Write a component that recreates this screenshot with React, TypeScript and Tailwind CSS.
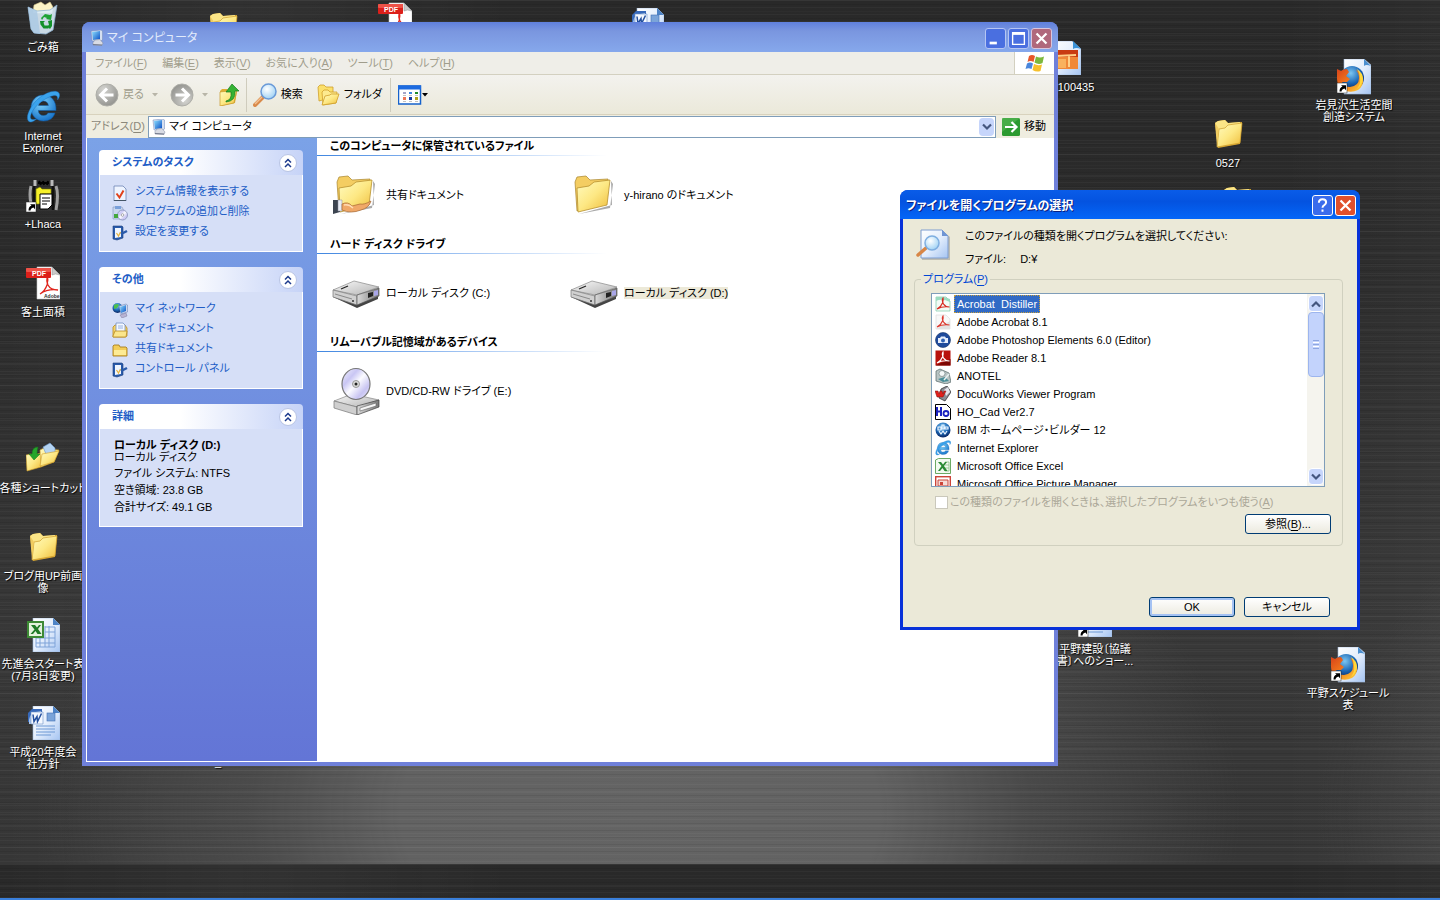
import React from 'react';

interface IconProps {
  className?: string;
}

interface AccelProps {
  text: string;
  hotkey: string;
  tail?: string;
}

const Accel: React.FC<AccelProps> = ({ text, hotkey, tail = '' }) => (
  <span>
    {text}(<u className="underline-offset-2">{hotkey}</u>){tail}
  </span>
);

/* ---------- shared gradients ---------- */

const Gradients = () => (
  <svg className="absolute h-0 w-0" aria-hidden="true">
    <defs>
      <linearGradient id="gold" x1="0" y1="0" x2="1" y2="1">
        <stop offset="0" stopColor="#fffbc0" />
        <stop offset="0.5" stopColor="#fde884" />
        <stop offset="1" stopColor="#eebb38" />
      </linearGradient>
      <linearGradient id="paper" x1="0" y1="0" x2="1" y2="1">
        <stop offset="0" stopColor="#ffffff" />
        <stop offset="0.5" stopColor="#e4eefc" />
        <stop offset="1" stopColor="#a5c4f2" />
      </linearGradient>
      <linearGradient id="steel" x1="0" y1="0" x2="1" y2="1">
        <stop offset="0" stopColor="#f8f8f8" />
        <stop offset="1" stopColor="#b4b4b4" />
      </linearGradient>
      <linearGradient id="steelDark" x1="0" y1="0" x2="1" y2="0">
        <stop offset="0" stopColor="#dadada" />
        <stop offset="1" stopColor="#777777" />
      </linearGradient>
      <radialGradient id="lens" cx="0.4" cy="0.35" r="0.7">
        <stop offset="0" stopColor="#ffffff" />
        <stop offset="1" stopColor="#9bd0f4" />
      </radialGradient>
      <radialGradient id="ieBlue" cx="0.4" cy="0.3" r="0.8">
        <stop offset="0" stopColor="#7fd4fb" />
        <stop offset="1" stopColor="#0c68c4" />
      </radialGradient>
      <radialGradient id="globe" cx="0.45" cy="0.3" r="0.7">
        <stop offset="0" stopColor="#7cc6f2" />
        <stop offset="0.6" stopColor="#1c66b4" />
        <stop offset="1" stopColor="#0a2460" />
      </radialGradient>
      <linearGradient id="fox" x1="0" y1="0" x2="1" y2="1">
        <stop offset="0" stopColor="#d8431a" />
        <stop offset="0.5" stopColor="#f27a1c" />
        <stop offset="1" stopColor="#ffd83c" />
      </linearGradient>
      <radialGradient id="gray" cx="0.35" cy="0.25" r="0.8">
        <stop offset="0" stopColor="#d4d4d0" />
        <stop offset="1" stopColor="#92928e" />
      </radialGradient>
      <linearGradient id="screen" x1="0" y1="0" x2="1" y2="1">
        <stop offset="0" stopColor="#8fe0ff" />
        <stop offset="1" stopColor="#0a4fc4" />
      </linearGradient>
      <linearGradient id="disc" x1="0" y1="0" x2="1" y2="1">
        <stop offset="0" stopColor="#f4f4fb" />
        <stop offset="0.3" stopColor="#c9c6f4" />
        <stop offset="0.5" stopColor="#fbfbff" />
        <stop offset="0.75" stopColor="#c8c4f2" />
        <stop offset="1" stopColor="#eeeeff" />
      </linearGradient>
    </defs>
  </svg>
);

/* ---------- desktop icons, 34 x 34 ---------- */

const ShortcutArrow = () => (
  <g>
    <rect x="0" y="24" width="10" height="10" fill="#fff" stroke="#222" strokeWidth="0.5" />
    <path d="M2.5 32.5c0-2.600 1-4.300 3-5L4 26.200h5v5l-1.600-1.600c-1.600.4-2.600 1.400-2.900 2.900z" fill="#000" />
  </g>
);

const RecycleBin = () => (
  <svg viewBox="0 0 34 34" className="h-[34px] w-[34px]">
    <path d="M8 4l7-3 4 3 5-3 3 5-1 6H7z" fill="#fdf4c6" stroke="#d8c88c" strokeWidth="0.6" />
    <path d="M2 6l9 4 13-1 7-5-4 25-7 4-12-1-3-4z" fill="#dcecf8" fillOpacity="0.9" stroke="#8fb2d0" strokeWidth="0.8" />
    <path d="M2 6l9 4 3 23-6-1-3-4z" fill="#a9c8e4" fillOpacity="0.8" />
    <path d="M15 17l4-4 5 1 2-1-1 6-5-1 1-1-3-1-2 3z" fill="#1fa336" />
    <path d="M14 20l5 0-1.500 1.500 1 3 4 0v3h-5l-3-4zM22 20l4-1 0 6-2 3-3-3 2-1z" fill="#13912a" />
  </svg>
);

const InternetExplorer: React.FC<IconProps> = ({ className = 'h-[34px] w-[34px]' }) => (
  <svg viewBox="0 0 34 34" className={className}>
    <path
      d="M17.500 5C9.500 5 5 11 5 18s5 13 12.500 13c6 0 10-3 11.500-8h-7c-1 1.800-2.500 2.500-4.500 2.500-3 0-5-1.800-5.200-5H30C30.500 11 25.500 5 17.500 5zm-5 10.500c.5-2.800 2.400-4.500 5-4.500s4.600 1.700 4.900 4.500z"
      fill="url(#ieBlue)"
      stroke="#0b5aa8"
      strokeWidth="0.5"
    />
    <path d="M4 32C-2 30 3 17 12 9 20 2 30-1 33 3c1.500 2.500 0 5-1.500 7 .5-3-.5-5-3.500-4.500C21 6.500 9 15 5.500 23c-1.500 3.500-1.500 6 1 6.500 1.500.3 3 0 4.500-1C8.500 31 6 32.500 4 32z" fill="#3aa3ec" stroke="#1668b8" strokeWidth="0.4" />
  </svg>
);

const Lhaca = () => (
  <svg viewBox="0 0 34 34" className="h-[34px] w-[34px]">
    <path d="M9 2v6M26 2v6" stroke="#bbb" strokeWidth="3" />
    <path d="M12 5h11M13 3l2 4M17 3l1 4M22 3l-1 4" stroke="#000" strokeWidth="2" />
    <path d="M5 8q-2 8 0 18M30 8q3 8 0 24" stroke="#a0a0a0" strokeWidth="3" fill="none" />
    <path d="M8 8v20M27 8v24" stroke="#111" strokeWidth="2.500" />
    <path d="M10 11l4-2 2 2h9v5h-9v10h-6z" fill="#f6f02a" stroke="#777a00" strokeWidth="0.6" />
    <path d="M14 16h12v11l-4 4h-8z" fill="#fff" stroke="#000" />
    <path d="M16 20h8M16 23h8M16 26h5" stroke="#000" />
    <ShortcutArrow />
  </svg>
);

const PdfFile = () => (
  <svg viewBox="0 0 34 34" className="h-[34px] w-[34px]">
    <path d="M11 1h15l8 8v24H11z" fill="#fff" stroke="#c8c8c8" strokeWidth="0.6" />
    <path d="M26 1l8 8q-5-2-8 0z" fill="#c9c9c9" stroke="#888" strokeWidth="0.5" />
    <path d="M14 28q5-3 7-9 1.500-5 .5-8-1.500 3 .5 8 2.500 5 10 5-10-1.500-18 4z" fill="none" stroke="#e0241c" strokeWidth="1.300" />
    <rect x="0" y="2" width="25" height="10" rx="1" fill="#dc1f1a" />
    <rect x="0" y="2" width="25" height="4" rx="1" fill="#ee5248" />
    <text x="6" y="10" fontSize="7" fontWeight="700" fill="#fff" fontFamily="Liberation Sans">PDF</text>
    <text x="18" y="32" fontSize="5" fontWeight="700" fill="#333" fontFamily="Liberation Sans">Adobe</text>
  </svg>
);

const Folder = () => (
  <svg viewBox="0 0 34 34" className="h-[34px] w-[34px]">
    <path d="M4 6l3-2 7-1 3 3 14-1-2 22-22 4z" fill="#d9a832" />
    <path d="M4 6l3-2 7-1 3 3 12-1v6L7 13z" fill="#fbe587" />
    <path d="M8 12l6-1 3-3 14-2-2 20L6 30z" fill="url(#gold)" stroke="#cf9d2c" strokeWidth="0.7" />
    <path d="M4 6l2 24 2-18z" fill="#f0cc60" />
  </svg>
);

const ShortcutFolder = () => (
  <svg viewBox="0 0 34 34" className="h-[34px] w-[34px]">
    <path d="M0 13l5-1 2 1 8-2v14L1 29z" fill="url(#gold)" stroke="#cf9d2c" strokeWidth="0.6" />
    <path d="M14 8l4-2 4 1 11 1-5 12-13 5z" fill="url(#gold)" stroke="#cf9d2c" strokeWidth="0.6" />
    <path d="M17 5l7-4 5 5v9l-9-3z" fill="#b5d4f2" stroke="#6c97c8" strokeWidth="0.6" />
    <path d="M14 24l2-12 17-3-5 11z" fill="url(#gold)" stroke="#cf9d2c" strokeWidth="0.6" />
    <path d="M12 5q-6 0-6 7H3l5 6 6-6h-3q0-4 1-7z" fill="#27a52b" stroke="#117a18" strokeWidth="0.5" />
  </svg>
);

const ExcelFile = () => (
  <svg viewBox="0 0 34 34" className="h-[34px] w-[34px]">
    <path d="M7 0h20l7 7v27H7z" fill="url(#paper)" stroke="#9db8dc" strokeWidth="0.6" />
    <path d="M27 0l7 7h-7z" fill="#4d83c6" />
    <path d="M10 20h19v9H10zM10 25h19M14 20v9M19 8v21M23 8v21M19 9h10v11M19 14h10" fill="none" stroke="#7ea3d8" strokeWidth="1" />
    <rect x="1" y="3" width="17" height="17" fill="#3d8a35" />
    <rect x="3" y="5" width="13" height="13" fill="#e3f2dc" />
    <path d="M5 7h4l2 2.500 2-2.500h2l-3 4 3.500 5h-4l-2-3-2.500 3H4.500l4-4.500z" fill="#1f7a26" />
  </svg>
);

const WordFile: React.FC<{ shortcut?: boolean }> = ({ shortcut }) => (
  <svg viewBox="0 0 34 34" className="h-[34px] w-[34px]">
    <path d="M7 0h20l7 7v27H7z" fill="url(#paper)" stroke="#9db8dc" strokeWidth="0.6" />
    <path d="M27 0l7 7h-7z" fill="#4d83c6" />
    <path d="M10 20h19M10 23h19M10 26h19M10 29h15" stroke="#6d98d4" />
    <rect x="21" y="7" width="8" height="8" fill="#7ba4d9" stroke="#416fb4" strokeWidth="0.6" />
    <path d="M2 16V7l4-4h10v14" fill="#3769ba" />
    <path d="M3 14q0-8 12-9v13H3z" fill="#a9c4ea" />
    <path d="M5 6h12v12H5z" fill="#f4f8ff" stroke="#6d90c8" strokeWidth="0.6" />
    <path d="M7 8.500l1 7 3-5 .5 5 4-8" fill="none" stroke="#234f9e" strokeWidth="1.500" />
    {shortcut && <ShortcutArrow />}
  </svg>
);

const PictureFile = () => (
  <svg viewBox="0 0 34 34" className="h-[34px] w-[34px]">
    <path d="M5 0h20l9 8v26H5z" fill="url(#paper)" stroke="#9db8dc" strokeWidth="0.6" />
    <path d="M26 0l8 8q-5-2-8 0z" fill="#3b93d8" />
    <rect x="7" y="9" width="24" height="19" fill="#f08838" />
    <rect x="7" y="9" width="24" height="7" fill="#c93b12" />
    <path d="M9 15l20-1M22 15v11" stroke="#ffd088" strokeWidth="2" />
    <rect x="8" y="18" width="11" height="9" fill="#f9b25e" />
  </svg>
);

const FirefoxFile = () => (
  <svg viewBox="0 0 34 36" className="h-9 w-[34px]">
    <path d="M7 0h20l7 6v29H7z" fill="url(#paper)" stroke="#9db8dc" strokeWidth="0.6" />
    <path d="M27 0l7 7q-5-2-7 0z" fill="#4c8fce" />
    <circle cx="15" cy="19" r="12" fill="url(#globe)" />
    <path d="M0 10l4 2q2-2 6-2l2 3-3 4 4 3-3 3H5q2 5 8 5 9-1 9-9 0-5-3-8 5 2 7 8 1 8-5 12-6 3-12 1Q0 29 0 20z" fill="url(#fox)" />
    <path d="M20 10q6 4 6 10-1 7-6 10 4-5 3-11 0-5-3-9z" fill="#ffd93b" />
    <ShortcutArrow />
  </svg>
);

interface DesktopIconProps {
  /* horizontal centre and top of the icon on the desktop */
  x: number;
  y: number;
  icon?: React.ReactNode;
  lines?: string[];
}

const DesktopIcon: React.FC<DesktopIconProps> = ({ x, y, icon, lines = [] }) => (
  <div className="absolute flex w-24 flex-col items-center text-white" style={{ left: x - 48, top: y }}>
    <div className="h-10">{icon}</div>
    {lines.map((line) => (
      <span key={line} className="text-[11px] leading-3 whitespace-nowrap [text-shadow:1px_1px_1px_#000]">
        {line}
      </span>
    ))}
  </div>
);

const desktopIcons: DesktopIconProps[] = [
  { x: 43, y: 1, icon: <RecycleBin />, lines: ['ごみ箱'] },
  { x: 43, y: 90, icon: <InternetExplorer />, lines: ['Internet', 'Explorer'] },
  { x: 43, y: 178, icon: <Lhaca />, lines: ['+Lhaca'] },
  { x: 43, y: 266, icon: <PdfFile />, lines: ['客土面積'] },
  { x: 43, y: 442, icon: <ShortcutFolder />, lines: ['各種ショートカット'] },
  { x: 43, y: 530, icon: <Folder />, lines: ['ブログ用UP前画', '像'] },
  { x: 43, y: 618, icon: <ExcelFile />, lines: ['先進会スタート表', '(7月3日変更)'] },
  { x: 43, y: 706, icon: <WordFile />, lines: ['平成20年度会', '社方針'] },
  { x: 223, y: 10, icon: <Folder /> },
  { x: 395, y: 2, icon: <PdfFile /> },
  { x: 647, y: 8, icon: <WordFile /> },
  { x: 218, y: 716, lines: ['_'] },
  { x: 1064, y: 41, icon: <PictureFile /> },
  { x: 1076, y: 41, lines: ['100435'] },
  { x: 1228, y: 117, icon: <Folder />, lines: ['0527'] },
  { x: 1237, y: 184, icon: <Folder /> },
  { x: 1354, y: 59, icon: <FirefoxFile />, lines: ['岩見沢生活空間', '創造システム'] },
  { x: 1348, y: 647, icon: <FirefoxFile />, lines: ['平野スケジュール', '表'] },
  { x: 1095, y: 603, icon: <WordFile shortcut />, lines: ['平野建設〔協議', '書〕へのショー...'] },
];

/* ---------- explorer icons ---------- */

const Computer: React.FC<IconProps> = ({ className = 'h-4 w-4' }) => (
  <svg viewBox="0 0 16 16" className={className}>
    <path d="M2 1l10-1 1.500 1v9l-2 1H3z" fill="#d5dff0" stroke="#6f86b8" strokeWidth="0.5" />
    <path d="M3 2l8-1v8l-7 1z" fill="url(#screen)" />
    <path d="M6 10l5-.5 3 3.500-1 2.500-9-.5 0-2.500z" fill="#d8dbe4" stroke="#7b859c" strokeWidth="0.5" />
    <path d="M4 14.500l9 .5" stroke="#747a8c" />
  </svg>
);

const BackForward: React.FC<{ flip?: boolean }> = ({ flip }) => (
  <svg viewBox="0 0 24 24" className={flip ? 'h-6 w-6 rotate-180' : 'h-6 w-6'}>
    <circle cx="12" cy="12" r="11" fill="url(#gray)" stroke="#aeaea8" />
    <path d="M12 5.500L5.500 12l6.500 6.500M6 12h12.500" fill="none" stroke="#fff" strokeWidth="3" />
  </svg>
);

const UpFolder = () => (
  <svg viewBox="0 0 22 22" className="h-[22px] w-[22px]">
    <path d="M2 7l2-2 5 0 2 2 8 0-2 12-14 3z" fill="#e0ad34" />
    <path d="M2 8l17-2-3 13-14 3z" fill="url(#gold)" stroke="#c79a2c" strokeWidth="0.7" />
    <path d="M8 17q6-1 5-9H8l6-8 7 7h-4q1 10-9 11z" fill="#35b335" stroke="#157a1c" strokeWidth="0.7" />
  </svg>
);

const Magnifier = () => (
  <svg viewBox="0 0 24 24" className="h-6 w-6">
    <path d="M2 22l8-8" stroke="#d98a4a" strokeWidth="4" strokeLinecap="round" />
    <path d="M2 21l7-7" stroke="#f4c090" strokeWidth="1.500" />
    <circle cx="15.500" cy="8.500" r="7.500" fill="url(#lens)" stroke="#6a9ad8" strokeWidth="1.500" />
  </svg>
);

const Folders = () => (
  <svg viewBox="0 0 24 22" className="h-[22px] w-6">
    <path d="M1 3l2-2h4l2 2 7 0v10L2 17z" fill="#fbe06c" stroke="#cf9f2c" strokeWidth="0.8" />
    <path d="M5 8l2-2h4l2 2 7 0-1 11-13 2z" fill="#fdeb8f" stroke="#cf9f2c" strokeWidth="0.8" />
    <path d="M5 21l3-9 5-1 1-1 8 0-3 9z" fill="url(#gold)" stroke="#cf9f2c" strokeWidth="0.8" />
  </svg>
);

const Views = () => (
  <svg viewBox="0 0 24 20" className="h-5 w-6">
    <rect x="0.500" y="1" width="22" height="18" fill="#fff" stroke="#1562cc" strokeWidth="1.500" />
    <rect x="0" y="0.500" width="23" height="4" fill="#1d6be0" />
    <path d="M5 7h3v2H5z" fill="#a6a6c8" />
    <path d="M11 7h3v2h-3z" fill="#3c84e0" />
    <path d="M17 7h3v2h-3z" fill="#1d8c2a" />
    <path d="M5 12h3v3H5z" fill="#ee7858" />
    <path d="M11 12h3v3h-3z" fill="#173aa0" />
    <path d="M17 12h3v3h-3z" fill="#b0a01c" />
    <path d="M5 10.500h3M11 10.500h3M17 10.500h3M5 16.500h3M11 16.500h3M17 16.500h3" stroke="#999" strokeWidth="0.6" />
  </svg>
);

const Caret: React.FC<IconProps> = ({ className = 'text-black' }) => (
  <svg viewBox="0 0 6 4" className={`h-1 w-1.5 ${className}`}>
    <path d="M0 0h6L3 3.500z" fill="currentColor" />
  </svg>
);

const WindowsFlag = () => (
  <svg viewBox="0 0 20 18" className="h-[18px] w-5">
    <path d="M4 2q3-2 6 0L8.500 8q-3-2-6 0z" fill="#e8562a" />
    <path d="M11 2.500q4 2 8 0L17.500 9q-4 2-8-.5z" fill="#7cb83c" />
    <path d="M2 9.500q3-2 6 0L6.500 15q-3-1.500-6 0z" fill="#4a86dc" />
    <path d="M9 10q4 2 8 .5L15.500 17q-4 1.500-8-1z" fill="#f6c02c" />
  </svg>
);

const GoArrow = () => (
  <svg viewBox="0 0 18 18" className="h-[18px] w-[18px]">
    <rect width="18" height="18" rx="1.500" fill="#2c9a30" />
    <path d="M0 0h18L0 14z" fill="#5cba58" fillOpacity="0.6" />
    <path d="M3 9h11M9.500 4l5 5-5 5" fill="none" stroke="#fff" strokeWidth="2.200" />
  </svg>
);

const SheetCheck = () => (
  <svg viewBox="0 0 16 16" className="h-4 w-4">
    <path d="M2 1h9l3 3v12H2z" fill="#eef4ff" stroke="#6c84b4" strokeWidth="0.8" />
    <path d="M2 15.500h12" stroke="#456" />
    <path d="M4.500 8.500l3 4 4-7" fill="none" stroke="#e0421c" strokeWidth="2" />
  </svg>
);

const AddRemove = () => (
  <svg viewBox="0 0 16 16" className="h-4 w-4">
    <path d="M1 2h9l2 4v8H1z" fill="#c9d7ee" stroke="#8196bc" strokeWidth="0.6" />
    <path d="M3 1h6v3H3z" fill="#7aa0da" />
    <circle cx="10.500" cy="10" r="5" fill="url(#disc)" stroke="#7a86b0" strokeWidth="0.7" />
    <circle cx="10.500" cy="10" r="1.300" fill="#fff" stroke="#666" strokeWidth="0.5" />
    <rect x="2" y="9" width="4" height="4" fill="#44a83c" />
  </svg>
);

const ControlPanel = () => (
  <svg viewBox="0 0 16 16" className="h-4 w-4">
    <path d="M1 1l9 0 1 1v11l-6 2-4-1z" fill="#2a5bab" stroke="#1b3f7c" strokeWidth="0.6" />
    <path d="M3 3h6v9l-6 1z" fill="#f0f6ff" />
    <path d="M4.500 8l2 3 2-4" fill="none" stroke="#e8b43c" strokeWidth="1.200" />
    <path d="M9 9l6-3" stroke="#2a5bab" strokeWidth="2.500" />
  </svg>
);

const Network = () => (
  <svg viewBox="0 0 16 16" className="h-4 w-4">
    <circle cx="5.500" cy="6" r="5" fill="url(#globe)" />
    <path d="M2 3q3-2 5 0l-2 3-3 1z" fill="#4fc04c" />
    <path d="M7 4l7-2 1.500 1v7L9 12z" fill="#cfd8ee" stroke="#6478ac" strokeWidth="0.5" />
    <path d="M8 5l6-2v6l-5 2z" fill="url(#screen)" />
    <path d="M8 13l6-2 1 3-5 2z" fill="#b8b4d4" stroke="#7c789c" strokeWidth="0.5" />
  </svg>
);

const Documents = () => (
  <svg viewBox="0 0 16 16" className="h-4 w-4">
    <path d="M1 5l2-2 10 0 2 3v8l-2 1H1z" fill="#f5d468" stroke="#b98a22" strokeWidth="0.8" />
    <path d="M4 1h7l2 2v8H4z" fill="#f4f8ff" stroke="#7390c4" strokeWidth="0.8" />
    <path d="M6 4h5M6 6h5" stroke="#7da0dc" strokeWidth="0.8" />
    <path d="M1 14l2-5h12l-1 6H1z" fill="#fbe68c" stroke="#b98a22" strokeWidth="0.8" />
  </svg>
);

const SmallFolder = () => (
  <svg viewBox="0 0 16 16" className="h-4 w-4">
    <path d="M1 4l1-1h5l1 2h6l1 1v8H1z" fill="#f3cd58" stroke="#a87f20" strokeWidth="0.9" />
    <path d="M2 8h12v5H2z" fill="#fdeb95" />
  </svg>
);

const BigFolder: React.FC<{ shared?: boolean }> = ({ shared }) => (
  <svg viewBox="0 0 48 48" className="h-12 w-12">
    <path d="M41 10l1 24-33 9 31-6 3-24z" fill="#555" fillOpacity="0.5" />
    <path d="M5 11l2-5 9-1 4 4 18-1v6L7 40z" fill="#f4cd62" stroke="#a8842c" strokeWidth="0.7" />
    <path d="M7 17l12-2 5-4 16-2-3 25-29 7z" fill="url(#gold)" stroke="#b8902f" strokeWidth="0.8" />
    {shared && (
      <g>
        <path d="M1 29l7 0v12l-7 2z" fill="#3c4450" />
        <path d="M6 29h4v11H6z" fill="#e8ecf4" stroke="#889" strokeWidth="0.5" />
        <path d="M10 33q6-3 10 2l8-2q4 1 11-3-2 7-10 9-10 4-19 0z" fill="#f0a868" stroke="#a86832" strokeWidth="0.7" />
        <path d="M12 34q5-1 9 3" fill="none" stroke="#ffdcb4" strokeWidth="1.500" />
      </g>
    )}
  </svg>
);

const HardDisk = () => (
  <svg viewBox="0 0 48 48" className="h-12 w-12">
    <path d="M1 22l24 9 21-6v5l-21 9L1 28z" fill="#444" />
    <path d="M1 21L22 12l25 6-22 8z" fill="url(#steel)" stroke="#888" strokeWidth="0.7" />
    <path d="M1 21l24 6v9L1 28z" fill="#d0d0d0" stroke="#777" strokeWidth="0.7" />
    <path d="M25 26l22-7v8l-22 9z" fill="url(#steelDark)" stroke="#555" strokeWidth="0.7" />
    <path d="M36 24l5-1v4l-5 2z" fill="#222" />
    <path d="M42 22l4-1v5l-4 1z" fill="#a9a6e8" />
    <path d="M9 20l7-3" stroke="#222" strokeWidth="1.200" />
    <path d="M3 25l17 5" stroke="#8a8a8a" />
    <circle cx="21" cy="32" r="1" fill="#333" />
  </svg>
);

const DvdDrive = () => (
  <svg viewBox="0 0 48 48" className="h-12 w-12">
    <path d="M2 34l18-7 27 6-22 7z" fill="url(#steel)" stroke="#888" strokeWidth="0.7" />
    <path d="M2 34l23 6v8L2 41z" fill="#cfcfcf" stroke="#777" strokeWidth="0.7" />
    <path d="M25 39l22-6v7l-22 8z" fill="url(#steelDark)" stroke="#444" strokeWidth="0.7" />
    <path d="M28 41l16-5v3l-16 5z" fill="#f6f6f6" stroke="#555" strokeWidth="0.5" />
    <ellipse cx="24" cy="17" rx="14" ry="15.500" fill="url(#disc)" stroke="#777" strokeWidth="1.200" />
    <circle cx="24" cy="17" r="3.500" fill="#ddd" stroke="#999" />
    <circle cx="24" cy="17" r="1.500" fill="#222" />
  </svg>
);

/* ---------- explorer window ---------- */

const CaptionButton: React.FC<{ label: string; className: string; children: React.ReactNode }> = ({ label, className, children }) => (
  <button type="button" aria-label={label} className={`flex h-[21px] w-[21px] items-center justify-center rounded-[3px] border ${className}`}>
    <svg viewBox="0 0 21 21" className="h-[19px] w-[19px]">{children}</svg>
  </button>
);

const Chevron: React.FC<IconProps> = ({ className = '' }) => (
  <svg viewBox="0 0 10 8" className={`h-2 w-2.5 ${className}`}>
    <path d="M1 1.500l4 4 4-4" fill="none" stroke="#44567f" strokeWidth="2.200" />
  </svg>
);

const menuItems = [
  { text: 'ファイル', hotkey: 'F' },
  { text: '編集', hotkey: 'E' },
  { text: '表示', hotkey: 'V' },
  { text: 'お気に入り', hotkey: 'A' },
  { text: 'ツール', hotkey: 'T' },
  { text: 'ヘルプ', hotkey: 'H' },
];

interface TaskPanelProps {
  title: string;
  items?: { icon: React.ReactNode; text: string }[];
  children?: React.ReactNode;
}

const TaskPanel: React.FC<TaskPanelProps> = ({ title, items, children }) => (
  <section>
    <header className="flex h-[25px] items-center justify-between rounded-t-[4px] bg-linear-to-r from-white from-40% to-[#c6d3f7] pr-1.5 pl-[13px]">
      <h2 className="text-[11px] font-bold text-[#215dc6]">{title}</h2>
      <button type="button" aria-label={title} className="flex h-[18px] w-[18px] items-center justify-center rounded-full border border-[#b8c4e4] bg-white">
        <svg viewBox="0 0 10 10" className="h-2.5 w-2.5">
          <path d="M2 4.500l3-3 3 3M2 9l3-3 3 3" fill="none" stroke="#1c3a8c" strokeWidth="1.500" />
        </svg>
      </button>
    </header>
    <div className="border border-t-0 border-white bg-[#d6dff7] px-3 pt-1.5 pb-2.5">
      {items?.map((item) => (
        <a key={item.text} href="#" className="flex h-5 items-center gap-[7px] text-[11px] text-[#215dc6]">
          <span className="pt-1">{item.icon}</span>
          {item.text}
        </a>
      ))}
      {children}
    </div>
  </section>
);

const sections = [
  {
    title: 'このコンピュータに保管されているファイル',
    items: [
      { icon: <BigFolder shared />, text: '共有ドキュメント' },
      { icon: <BigFolder />, text: 'y-hirano のドキュメント' },
    ],
  },
  {
    title: 'ハード ディスク ドライブ',
    items: [
      { icon: <HardDisk />, text: 'ローカル ディスク (C:)' },
      { icon: <HardDisk />, text: 'ローカル ディスク (D:)', selected: true },
    ],
  },
  {
    title: 'リムーバブル記憶域があるデバイス',
    items: [{ icon: <DvdDrive />, text: 'DVD/CD-RW ドライブ (E:)' }],
  },
];

const ExplorerWindow = () => (
  <div className="absolute top-[22px] left-[82px] flex h-[744px] w-[976px] flex-col rounded-t-lg bg-[#6f80da] px-1 pb-1">
    <header className="-mx-1 flex h-[30px] shrink-0 items-center rounded-t-lg bg-linear-to-b from-[#5f7fdc] via-[#7a96df] via-30% to-[#86a8ec] pt-0.5 pr-1.5 pl-[7px]">
      <Computer />
      <h1 className="flex-1 pl-0.5 text-xs text-[#e2ebfb]">マイ コンピュータ</h1>
      <div className="flex gap-0.5">
        <CaptionButton label="最小化" className="border-[#b5c5f3] bg-[#4a6fe0]">
          <path d="M4 14h8v3H4z" fill="#fff" />
        </CaptionButton>
        <CaptionButton label="最大化" className="border-[#b5c5f3] bg-[#4a6fe0]">
          <path d="M4 4h13v13H4z" fill="none" stroke="#fff" strokeWidth="1.500" />
          <path d="M3.500 3.500h14v3h-14z" fill="#fff" />
        </CaptionButton>
        <CaptionButton label="閉じる" className="border-[#d9c5dc] bg-[#b0687c]">
          <path d="M5 5l11 11M16 5L5 16" stroke="#fff" strokeWidth="2.500" />
        </CaptionButton>
      </div>
    </header>

    <nav className="flex h-[23px] shrink-0 items-stretch justify-between border-b border-[#d3d0c0] bg-[#efeee8] text-[11px] text-[#a09d8c]">
      <div className="flex items-center gap-[15px] pl-[9px]">
        {menuItems.map((item) => (
          <button key={item.hotkey} type="button">
            <Accel {...item} />
          </button>
        ))}
      </div>
      <div className="flex w-10 items-center justify-center border-l border-[#d3d0c0] bg-white">
        <WindowsFlag />
      </div>
    </nav>

    <div className="flex h-10 shrink-0 items-center border-b border-[#d8d2bd] bg-linear-to-b from-[#f3f2ee] to-[#ebe9da] pl-[9px] text-[11px]">
      <button type="button" className="flex items-center gap-1 text-[#a09d8c]">
        <BackForward />
        戻る
      </button>
      <Caret className="ml-2 text-[#b8b5a8]" />
      <button type="button" aria-label="進む" className="ml-3">
        <BackForward flip />
      </button>
      <Caret className="ml-2 text-[#b8b5a8]" />
      <button type="button" aria-label="上へ" className="ml-2.5">
        <UpFolder />
      </button>
      <div className="mx-1.5 h-[34px] w-px bg-[#cfccbd]" />
      <button type="button" className="flex items-center gap-1">
        <Magnifier />
        検索
      </button>
      <button type="button" className="ml-3.5 flex items-center gap-[3px]">
        <Folders />
        フォルダ
      </button>
      <div className="mr-[7px] ml-2 h-[34px] w-px bg-[#cfccbd]" />
      <button type="button" aria-label="表示" className="flex items-center">
        <Views />
        <Caret />
      </button>
    </div>

    <div className="flex h-[23px] shrink-0 items-center bg-[#efede0] pr-2 pl-[5px] text-[11px]">
      <label htmlFor="address" className="w-[57px] whitespace-nowrap text-[#8b887a]">
        <Accel text="アドレス" hotkey="D" />
      </label>
      <div className="flex h-[22px] flex-1 items-center border border-[#7f9db9] bg-white pr-px pl-0.5">
        <Computer />
        <input id="address" defaultValue="マイ コンピュータ" className="min-w-0 flex-1 pl-0.5 outline-none" />
        <button type="button" aria-label="アドレス一覧" className="flex h-[18px] w-[15px] items-center justify-center rounded-sm bg-[#c6d5fb]">
          <Chevron />
        </button>
      </div>
      <button type="button" className="ml-1.5 flex items-center gap-1">
        <GoArrow />
        移動
      </button>
    </div>

    <div className="flex min-h-0 flex-1 border-b border-l border-white">
      <aside className="flex w-[230px] shrink-0 flex-col gap-[15px] bg-linear-to-b from-[#7ba2e7] to-[#6375d6] px-3 pt-3 pr-3.5">
        <TaskPanel
          title="システムのタスク"
          items={[
            { icon: <SheetCheck />, text: 'システム情報を表示する' },
            { icon: <AddRemove />, text: 'プログラムの追加と削除' },
            { icon: <ControlPanel />, text: '設定を変更する' },
          ]}
        />
        <TaskPanel
          title="その他"
          items={[
            { icon: <Network />, text: 'マイ ネットワーク' },
            { icon: <Documents />, text: 'マイ ドキュメント' },
            { icon: <SmallFolder />, text: '共有ドキュメント' },
            { icon: <ControlPanel />, text: 'コントロール パネル' },
          ]}
        />
        <TaskPanel title="詳細">
          <div className="pt-1 pl-0.5 text-[11px]">
            <p className="leading-3 font-bold">ローカル ディスク (D:)</p>
            <p className="leading-3">ローカル ディスク</p>
            <p className="pt-0.5 leading-[17px]">ファイル システム: NTFS</p>
            <p className="leading-[17px]">空き領域: 23.8 GB</p>
            <p className="leading-[17px]">合計サイズ: 49.1 GB</p>
          </div>
        </TaskPanel>
      </aside>

      <main className="flex-1 bg-white">
        {sections.map((section) => (
          <section key={section.title}>
            <h2 className="flex h-[17px] items-center pl-[13px] text-[11px] font-bold">{section.title}</h2>
            <div className="h-px w-[290px] bg-linear-to-r from-[#3f86e0] to-white" />
            <div className="grid grid-cols-[238px_238px] pt-[15px] pb-[17px] pl-[15px]">
              {section.items.map((item) => (
                <div key={item.text} className="flex items-center gap-1.5 text-[11px] leading-3">
                  {item.icon}
                  <span className={'selected' in item ? 'bg-[#ece9d8]' : ''}>{item.text}</span>
                </div>
              ))}
            </div>
          </section>
        ))}
      </main>
    </div>
  </div>
);

/* ---------- program icons, 16 x 16 ---------- */

const AcrobatMark: React.FC<{ stroke: string }> = ({ stroke }) => (
  <path d="M2 13q4-2 5.500-6Q8.500 3.500 8 2 6.500 4 8.500 8q2 3 6 3-7-1-12.500 2z" fill="none" stroke={stroke} strokeWidth="1.200" />
);

const Distiller = () => (
  <svg viewBox="0 0 16 16" className="h-4 w-4">
    <path d="M1 1h10l4 4v10H1z" fill="#f2fbf6" stroke="#7cc8a8" strokeWidth="0.7" />
    <path d="M1 5q6-3 14 1V3L9 1H1z" fill="#9cdcc0" />
    <AcrobatMark stroke="#d82a22" />
  </svg>
);

const Acrobat = () => (
  <svg viewBox="0 0 16 16" className="h-4 w-4">
    <path d="M1 1h10l4 4v10H1z" fill="#f8f8f8" stroke="#dcdcdc" strokeWidth="0.7" />
    <path d="M1 15h14V7z" fill="#e2e2e2" />
    <AcrobatMark stroke="#dc3a30" />
  </svg>
);

const Photoshop = () => (
  <svg viewBox="0 0 16 16" className="h-4 w-4">
    <circle cx="8" cy="8" r="7.500" fill="#1f4b9c" stroke="#123268" strokeWidth="0.6" />
    <path d="M3 6h2l1-1.500h4L11 6h2v5H3z" fill="#e6eefc" />
    <circle cx="8" cy="8.500" r="2" fill="#2f62b4" />
  </svg>
);

const Reader = () => (
  <svg viewBox="0 0 16 16" className="h-4 w-4">
    <rect x="0.500" y="0.500" width="15" height="15" fill="#b8120c" />
    <path d="M.5 15.500h15V9z" fill="#7c0804" />
    <AcrobatMark stroke="#fff" />
  </svg>
);

const Anotel = () => (
  <svg viewBox="0 0 16 16" className="h-4 w-4">
    <path d="M1 3l4-2 9 4 2 9-5 2-10-3z" fill="#b8c4c4" stroke="#566" strokeWidth="0.7" />
    <circle cx="7" cy="5.500" r="3" fill="#f4f8f8" stroke="#677" strokeWidth="0.6" />
    <path d="M3 11l7-2 4 4-6 1z" fill="#4a8e98" />
    <path d="M9 12l5-6" stroke="#e8f0f0" strokeWidth="1.500" />
  </svg>
);

const DocuWorks = () => (
  <svg viewBox="0 0 16 16" className="h-4 w-4">
    <path d="M6 3l6-3 4 6-6 9-6-3z" fill="#8c8c94" stroke="#222" strokeWidth="0.7" />
    <path d="M9 4l4-3 2 5-4 4z" fill="#e4e4ec" />
    <path d="M0 5l3 0 1 3 1-3h2l1 3 1-3h2l-3 6H2z" fill="#e0201c" stroke="#801010" strokeWidth="0.5" />
  </svg>
);

const HoCad = () => (
  <svg viewBox="0 0 16 16" className="h-4 w-4">
    <path d="M.5.500h11l4 4v11H.5z" fill="#fff" stroke="#000" />
    <path d="M2 3v9M6 3v9M2 7.500h4" stroke="#1a22c0" strokeWidth="2" />
    <circle cx="11" cy="9.500" r="2.500" fill="none" stroke="#1a22c0" strokeWidth="1.800" />
  </svg>
);

const HomepageBuilder = () => (
  <svg viewBox="0 0 16 16" className="h-4 w-4">
    <circle cx="8" cy="8" r="7.500" fill="url(#globe)" />
    <path d="M3 5h3v3H3zM7 3h2v4H7zM10 5h3v2h-3zM4 9l2 3 2-3 2 3 2-3" fill="none" stroke="#eaf4ff" strokeWidth="1.200" />
  </svg>
);

const Excel = () => (
  <svg viewBox="0 0 16 16" className="h-4 w-4">
    <path d="M.5 2l3-1.500h12v15H.5z" fill="#f2faf0" stroke="#5ca054" strokeWidth="0.9" />
    <path d="M10 4h4v9h-4M10 7h4M10 10h4" fill="none" stroke="#8cc084" strokeWidth="0.8" />
    <path d="M3 4h3l2 2.500L10 4h2L9 8l3.500 5h-3L7.500 10 5 13H3l3.500-5z" fill="#2a8a34" />
  </svg>
);

const PictureManager = () => (
  <svg viewBox="0 0 16 16" className="h-4 w-4">
    <rect x="0.700" y="0.700" width="14.600" height="14.600" fill="#fff" stroke="#cc4438" strokeWidth="1.400" />
    <path d="M3 4h10v6H3z" fill="#f4dcd8" stroke="#cc4438" />
    <path d="M5 6h3v3H5z" fill="#cc4438" />
  </svg>
);

const programs = [
  { name: 'Acrobat  Distiller', icon: <Distiller /> },
  { name: 'Adobe Acrobat 8.1', icon: <Acrobat /> },
  { name: 'Adobe Photoshop Elements 6.0 (Editor)', icon: <Photoshop /> },
  { name: 'Adobe Reader 8.1', icon: <Reader /> },
  { name: 'ANOTEL', icon: <Anotel /> },
  { name: 'DocuWorks Viewer Program', icon: <DocuWorks /> },
  { name: 'HO_Cad Ver2.7', icon: <HoCad /> },
  { name: 'IBM ホームページ・ビルダー 12', icon: <HomepageBuilder /> },
  { name: 'Internet Explorer', icon: <InternetExplorer className="h-4 w-4" /> },
  { name: 'Microsoft Office Excel', icon: <Excel /> },
  { name: 'Microsoft Office Picture Manager', icon: <PictureManager /> },
];

const DialogButton: React.FC<{ primary?: boolean; children: React.ReactNode }> = ({ primary, children }) => (
  <button
    type="button"
    className={`h-5 w-[86px] rounded-[3px] border border-[#003c74] bg-linear-to-b from-white to-[#eceadf] leading-3 ${primary ? 'inset-ring-2 inset-ring-[#a5c2f3]' : ''}`}
  >
    {children}
  </button>
);

const OpenWithDialog = () => (
  <div
    role="dialog"
    aria-labelledby="dialog-title"
    className="absolute top-[190px] left-[900px] w-[460px] rounded-t-lg bg-[#0831d9] px-[3px] pb-[3px] text-[11px]"
  >
    <header className="-mx-[3px] flex h-[29px] items-center rounded-t-lg bg-linear-to-b from-[#0a5ce8] via-[#0453e0] via-40% to-[#0466f8] pt-0.5 pr-1 pl-1.5">
      <h2 id="dialog-title" className="flex-1 text-xs font-bold text-white [text-shadow:1px_1px_0_#0a1f80]">
        ファイルを開くプログラムの選択
      </h2>
      <div className="flex gap-0.5">
        <CaptionButton label="ヘルプ" className="border-white bg-[#3a6cec]">
          <path d="M6.500 7.500q0-4 4-4t4 3.500q0 2-2 3-2 1-2 3M10.500 15v2.500" fill="none" stroke="#fff" strokeWidth="2.200" />
        </CaptionButton>
        <CaptionButton label="閉じる" className="border-white bg-[#e0502c]">
          <path d="M5 5l11 11M16 5L5 16" stroke="#fff" strokeWidth="2.500" />
        </CaptionButton>
      </div>
    </header>

    <div className="bg-[#ebe9d8] pb-[10px]">
      <div className="flex gap-3.5 pt-1.5 pl-3">
        <svg viewBox="0 0 36 36" className="mt-0.5 h-9 w-9">
          <path d="M6 3h21l7 6v23H6z" fill="#555" fillOpacity="0.300" transform="translate(1 1)" />
          <path d="M6 3h21l6 6v22H6z" fill="url(#paper)" stroke="#7d9cd0" />
          <path d="M27 3l6 6h-6z" fill="#6f95d4" />
          <path d="M3 28l8-7" stroke="#d88646" strokeWidth="3.500" strokeLinecap="round" />
          <circle cx="17" cy="16" r="7" fill="url(#lens)" stroke="#7faee0" strokeWidth="1.500" />
        </svg>
        <div className="leading-[23px]">
          <p>このファイルの種類を開くプログラムを選択してください:</p>
          <p className="flex gap-3.5">
            <span>ファイル:</span>
            <span>D:¥</span>
          </p>
        </div>
      </div>

      <fieldset className="mr-[14px] ml-[11px] rounded border border-[#d0d0bf] pr-[17px] pb-[11px] pl-4">
        <legend className="-ml-2.5 px-0.5 leading-4 text-[#0046d5]">
          <Accel text="プログラム" hotkey="P" />
        </legend>
        <div className="mt-1.5 flex h-[194px] overflow-hidden border border-[#7f9db9] bg-white">
          <ul role="listbox" aria-label="プログラム" className="flex-1 overflow-hidden pt-px pl-[3px]">
            {programs.map((program, index) => (
              <li key={program.name} role="option" aria-selected={index === 0} className="flex h-[18px] items-center gap-[3px]">
                {program.icon}
                <span
                  className={`h-[18px] px-[3px] leading-[18px] whitespace-pre ${index === 0 ? 'bg-[#316ac5] text-white outline-1 -outline-offset-1 outline-[#c8a03c] outline-dotted' : ''}`}
                >
                  {program.name}
                </span>
              </li>
            ))}
          </ul>
          <div className="flex w-[17px] flex-col items-center bg-[#f5f4ee] py-px">
            <button type="button" aria-label="上へスクロール" className="flex h-[17px] w-4 items-center justify-center rounded-sm border border-white bg-[#c6d5fb]">
              <Chevron className="rotate-180" />
            </button>
            <div className="flex h-[65px] w-4 flex-col items-center justify-center gap-px rounded-sm border border-[#9db5ee] bg-[#c3d3fc]">
              <span className="h-px w-1.5 bg-[#8ea6e0]" />
              <span className="h-px w-1.5 bg-white" />
              <span className="h-px w-1.5 bg-[#8ea6e0]" />
              <span className="h-px w-1.5 bg-white" />
              <span className="h-px w-1.5 bg-[#8ea6e0]" />
            </div>
            <button type="button" aria-label="下へスクロール" className="mt-auto flex h-[17px] w-4 items-center justify-center rounded-sm border border-white bg-[#c6d5fb]">
              <Chevron />
            </button>
          </div>
        </div>
        <div className="mt-2 flex items-center gap-0.5 pl-1 leading-[14px] whitespace-nowrap text-[#aca899]">
          <input id="always" type="checkbox" disabled className="h-[13px] w-[13px] appearance-none border border-[#cac8bb] bg-white" />
          <label htmlFor="always">
            <Accel text="この種類のファイルを開くときは、選択したプログラムをいつも使う" hotkey="A" />
          </label>
        </div>
        <div className="-mr-1.5 mt-[5px] flex justify-end">
          <DialogButton>
            <Accel text="参照" hotkey="B" tail="..." />
          </DialogButton>
        </div>
      </fieldset>

      <div className="mt-[51px] mr-[27px] flex justify-end gap-[9px]">
        <DialogButton primary>OK</DialogButton>
        <DialogButton>キャンセル</DialogButton>
      </div>
    </div>
  </div>
);

export default function App() {
  return (
    <div className="relative h-screen w-full overflow-hidden bg-[#2b2b2b] bg-[repeating-linear-gradient(180deg,rgba(255,255,255,0.03)_0_1px,transparent_1px_4px,rgba(0,0,0,0.07)_4px_5px,transparent_5px_7px),repeating-linear-gradient(180deg,rgba(255,255,255,0.03)_0_1px,transparent_1px_11px),radial-gradient(ellipse_600px_400px_at_50%_94%,#646464_0%,#626262_40%,rgba(78,78,78,0.8)_65%,transparent_100%),linear-gradient(90deg,transparent_0%,rgba(255,255,255,0.04)_20%,transparent_40%),linear-gradient(180deg,#292929_0%,#2b2b2b_30%,#383838_75%,#363636_100%)] bg-[length:1280px_864px] font-['Liberation_Sans','Noto_Sans_CJK_JP',sans-serif] text-black [font-feature-settings:'palt']">
      <Gradients />
      {desktopIcons.map((item, index) => (
        <DesktopIcon key={index} {...item} />
      ))}
      <ExplorerWindow />
      <OpenWithDialog />
      <footer className="absolute inset-x-0 bottom-0 h-0.5 bg-[#3a80dc]" />
    </div>
  );
}
